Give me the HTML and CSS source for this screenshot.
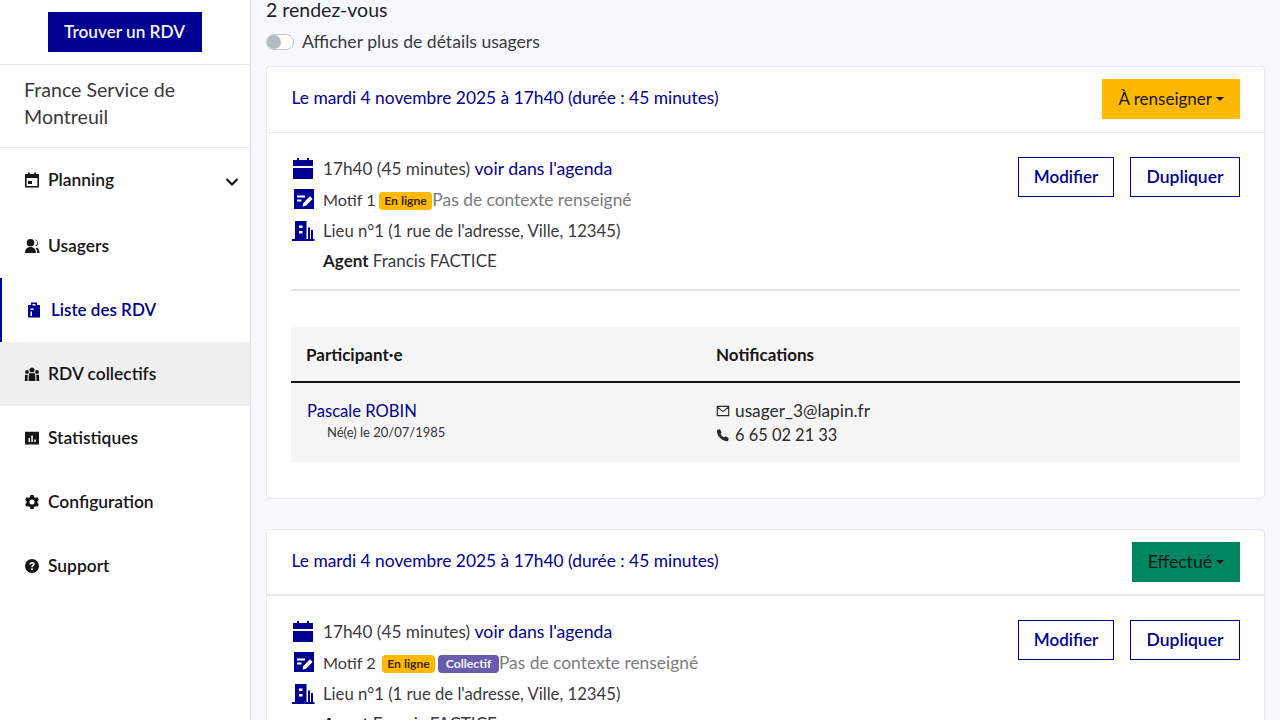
FILE: index.html
```html
<!DOCTYPE html>
<html lang="fr">
<head>
<meta charset="utf-8">
<title>Liste des RDV</title>
<link rel="stylesheet" href="styles.css">
</head>
<body>
<svg class="defs" width="0" height="0" aria-hidden="true">
  <symbol id="i-cal" viewBox="0 0 24 24"><path d="M6 1h2v2h8V1h2v2h4v6H2V3h4V1zM2 11h20v11H2V11z"/></symbol>
  <symbol id="i-note" viewBox="0 0 24 24"><rect x="3" y="2" width="20" height="20"/><path d="M6 9.500h8M6 13.500h4.500" fill="none" stroke="#fff" stroke-width="1.800"/><path d="M11.500 19.500l.8-3.500L19 9.300l2.600 2.600-6.600 6.800z" fill="#fff"/></symbol>
  <symbol id="i-build" viewBox="0 0 24 24"><path fill-rule="evenodd" d="M4 2h11.500v18h1.500V8.500h2V20h1V11h2v9h1.500v2H1v-2h3V2zm4 4.500v2.500h3.500V6.500H8zm0 5.500v2.500h3.500V12H8z"/></symbol>
</svg>
<div class="app">
  <aside class="sidebar">
    <div class="side-top"><a class="find-btn" href="#">Trouver un RDV</a></div>
    <div class="org">France Service de Montreuil</div>
    <nav class="nav">
      <a class="nav-item nav-first" href="#">
        <svg class="nav-icon" viewBox="0 0 16 16"><path fill-rule="evenodd" d="M4 .5h1.800V2h4.400V.5H12V2h3v13.500H1V2h3V.5zM2.600 6v8h10.800V6H2.600zM4 9h4v3H4V9z"/></svg>
        <span>Planning</span>
        <svg class="chev" viewBox="0 0 14 10"><path d="M1.500 2l5.500 5.500L12.500 2" fill="none" stroke="currentColor" stroke-width="2.200"/></svg>
      </a>
      <a class="nav-item" href="#">
        <svg class="nav-icon" viewBox="0 0 16 16"><path d="M6.500 1a3.800 3.800 0 110 7.600 3.800 3.800 0 010-7.600zM1 15c0-3.800 2-6 5.500-6s5.500 2.200 5.500 6H1zM10.800 1.300a3.800 3.800 0 011.500 6.900l-1-.8a2.800 2.800 0 000-5.300zM13 9.500c1.500.9 2.500 2.800 2.500 5.500h-2.200c0-2.200-.7-3.800-1.700-4.800z"/></svg>
        <span>Usagers</span>
      </a>
      <a class="nav-item nav-active" href="#">
        <svg class="nav-icon" viewBox="0 0 16 16"><path fill-rule="evenodd" d="M5 .5h6V3h3v12.500H2V3h3V.5zM6.500 2v1.500h3V2h-3zM4.500 6.500v1.500h3V6.500h-3zm0 3V14H6V9.500H4.500z"/></svg>
        <span>Liste des RDV</span>
      </a>
      <a class="nav-item nav-hover" href="#">
        <svg class="nav-icon" viewBox="0 0 16 16"><path d="M8 1.500a2.500 2.500 0 110 5 2.500 2.500 0 010-5zM3 4a1.900 1.900 0 110 3.800A1.900 1.900 0 013 4zm10 0a1.900 1.900 0 110 3.800A1.900 1.900 0 0113 4zM5 7.300h6l.5 7.700h-7zM1 8.800h2.800l-.4 6.200H.8zm11.200 0H15l.2 6.200h-2.600z"/></svg>
        <span>RDV collectifs</span>
      </a>
      <a class="nav-item" href="#">
        <svg class="nav-icon" viewBox="0 0 16 16"><path fill-rule="evenodd" d="M1 1.800h14v12.700H1V1.800zM4.500 8v4H6V8H4.500zm2.800-2.500V12h1.500V5.500H7.300zm2.900 4V12h1.500V9.500h-1.500z"/></svg>
        <span>Statistiques</span>
      </a>
      <a class="nav-item" href="#">
        <svg class="nav-icon" viewBox="0 0 16 16"><path fill-rule="evenodd" d="M6.500 1h3l.5 1.900 1.500.9 1.900-.6 1.500 2.600-1.400 1.400v1.600l1.400 1.400-1.500 2.600-1.900-.6-1.500.9-.5 1.900h-3L6 13.100l-1.500-.9-1.900.6-1.500-2.600L2.500 8.800V7.200L1.100 5.800l1.500-2.600 1.900.6L6 2.900 6.500 1zM8 5.500a2.500 2.500 0 100 5 2.500 2.500 0 000-5z"/></svg>
        <span>Configuration</span>
      </a>
      <a class="nav-item" href="#">
        <svg class="nav-icon" viewBox="0 0 16 16"><path fill-rule="evenodd" d="M8 1a7 7 0 110 14A7 7 0 018 1zM7.200 10.300v1.700h1.600v-1.700H7.200zM8 4C6.500 4 5.400 4.900 5.300 6.400H7c0-.6.400-1 1-1s1 .4 1 .9c0 1-1.800 1.100-1.800 3h1.600c0-1.400 1.900-1.500 1.900-3.200C10.700 4.800 9.600 4 8 4z"/></svg>
        <span>Support</span>
      </a>
    </nav>
  </aside>
  <main class="main">
    <div class="count">2 rendez-vous</div>
    <div class="toggle-row"><span class="switch"><span class="knob"></span></span><span class="toggle-label">Afficher plus de détails usagers</span></div>

    <section class="card">
      <header class="card-head">
        <a class="date" href="#">Le mardi 4 novembre 2025 à 17h40 (durée : 45 minutes)</a>
        <button class="status status-todo">À renseigner<span class="caret"></span></button>
      </header>
      <div class="card-body">
        <div class="summary">
          <ul class="facts">
            <li class="fact"><svg class="fact-icon"><use href="#i-cal"/></svg><span class="lift">17h40 (45 minutes) <a class="agenda" href="#">voir dans l'agenda</a></span></li>
            <li class="fact"><svg class="fact-icon"><use href="#i-note"/></svg><span class="motif"><span class="motif-name">Motif 1</span><span class="badge badge-online">En ligne</span><span class="muted">Pas de contexte renseigné</span></span></li>
            <li class="fact fact-place"><svg class="fact-icon"><use href="#i-build"/></svg><span>Lieu n°1 (1 rue de l'adresse, Ville, 12345)</span></li>
            <li class="fact fact-plain"><span class="lift"><b>Agent</b> Francis FACTICE</span></li>
          </ul>
          <div class="actions"><a class="btn btn-edit" href="#">Modifier</a><a class="btn btn-dup" href="#">Dupliquer</a></div>
        </div>
        <table class="table">
          <thead><tr><th class="col-a">Participant·e</th><th>Notifications</th></tr></thead>
          <tbody><tr>
            <td class="person-cell"><a class="person" href="#">Pascale ROBIN</a><div class="birth">Né(e) le 20/07/1985</div></td>
            <td>
              <div class="contact"><svg class="contact-icon" viewBox="0 0 16 16"><path fill="none" stroke="currentColor" stroke-width="1.300" d="M1.500 2.700h13v10.600h-13zM1.800 3.500L8 8.700l6.200-5.200"/></svg>usager_3@lapin.fr</div>
              <div class="contact contact-phone"><svg class="contact-icon" viewBox="0 0 16 16"><path d="M4.500 1.500l2 3.500-1.300 1.500c.8 1.800 2.400 3.400 4.200 4.200L11 9.500l3.500 2-.5 2.800c-.2.400-.7.700-1.300.7C7 15 1 9 1 3.300c0-.6.300-1.100.7-1.300z"/></svg>6 65 02 21 33</div>
            </td>
          </tr></tbody>
        </table>
      </div>
    </section>

    <section class="card">
      <header class="card-head card-head-strong">
        <a class="date" href="#">Le mardi 4 novembre 2025 à 17h40 (durée : 45 minutes)</a>
        <button class="status status-done">Effectué<span class="caret"></span></button>
      </header>
      <div class="card-body">
        <div class="summary">
          <ul class="facts">
            <li class="fact"><svg class="fact-icon"><use href="#i-cal"/></svg><span class="lift">17h40 (45 minutes) <a class="agenda" href="#">voir dans l'agenda</a></span></li>
            <li class="fact"><svg class="fact-icon"><use href="#i-note"/></svg><span class="motif"><span class="motif-name">Motif 2</span><span class="badge badge-online badge-spaced">En ligne</span><span class="badge badge-coll">Collectif</span><span class="muted">Pas de contexte renseigné</span></span></li>
            <li class="fact fact-place"><svg class="fact-icon"><use href="#i-build"/></svg><span>Lieu n°1 (1 rue de l'adresse, Ville, 12345)</span></li>
            <li class="fact fact-plain"><span class="lift"><b>Agent</b> Francis FACTICE</span></li>
          </ul>
          <div class="actions"><a class="btn btn-edit" href="#">Modifier</a><a class="btn btn-dup" href="#">Dupliquer</a></div>
        </div>
      </div>
    </section>
  </main>
</div>
</body>
</html>
```
FILE: styles.css
```css
* { box-sizing: border-box; }
html, body { margin: 0; height: 720px; overflow: hidden; }
body { font-family: "Lato", "Liberation Sans", sans-serif; font-size: 17.3px; color: #1e1e1e; background: #f8f9fe; }
a { color: #000091; text-decoration: none; }
.defs { position: absolute; }
.app { display: flex; height: 720px; }

.sidebar { width: 251px; flex: none; background: #fff; border-right: 1px solid #dfe5ee; }
.side-top { height: 65px; padding-top: 12px; display: flex; justify-content: center; border-bottom: 1px solid #e5e9f0; padding-right: 1px; }
.find-btn { width: 154px; height: 40px; padding-bottom: 1px; background: #000091; color: #f5f5fe; font-weight: 600; font-size: 17.2px; display: flex; align-items: center; justify-content: center; }
.org { height: 83px; padding: 11px 40px 0 24px; font-size: 19.6px; line-height: 27px; color: #3a3a3a; border-bottom: 1px solid #e5e9f0; }

.nav { display: flex; flex-direction: column; }
.nav-item { height: 64px; padding-left: 24px; padding-bottom: 1px; display: flex; align-items: center; gap: 8px; color: #161616; font-weight: 600; font-size: 17.4px; }
.nav-first { height: 66px; padding-bottom: 3px; }
.nav-icon { width: 16px; height: 16px; fill: currentColor; flex: none; }
.chev { width: 14px; height: 10px; margin-left: auto; margin-right: 11px; margin-top: 4px; }
.nav-active { color: #000091; border-left: 2px solid #000091; gap: 9px; font-size: 17px; }
.nav-hover { background: #f0f0f0; }

.main { flex: 1; min-width: 0; padding: 0 15px 0 15px; }
.count { height: 18px; font-size: 19.5px; line-height: 20px; }
.toggle-row { height: 48px; display: flex; align-items: center; gap: 8px; color: #3a3a3a; font-size: 17.6px; }
.toggle-label { padding-bottom: 2px; }
.switch { width: 28px; height: 16px; border-radius: 8px; border: 1px solid #c5c5c5; background: #fff; display: block; }
.knob { width: 14px; height: 14px; border-radius: 50%; background: #b4bac2; display: block; }

.card { background: #fff; border: 1px solid #e5e9f0; border-radius: 4px; margin-bottom: 30px; }
.card-head { height: 66px; padding: 12px 24px 0; display: flex; justify-content: space-between; border-bottom: 1px solid #e5e9f0; }
.card-head-strong { border-bottom-width: 2px; }
.date { line-height: 38px; font-size: 17.38px; padding-left: 0.5px; }
.status { height: 40px; border: 0; padding: 0 16px 2px; color: #161616; font: inherit; font-size: 17px; display: flex; align-items: center; gap: 4px; }
.status-todo { background: #ffb900; }
.status-done { background: #008561; font-size: 17.6px; }
.caret { width: 0; height: 0; margin-top: 2px; border: 4px solid transparent; border-top-color: currentColor; border-bottom: 0; }

.card-body { padding: 24px 24px 36px; }
.summary { display: flex; justify-content: space-between; height: 134px; border-bottom: 2px solid #e2e2e2; }
.facts { list-style: none; margin: 0; padding: 0; }
.fact { height: 24px; margin-bottom: 6px; display: flex; align-items: center; gap: 8px; color: #3a3a3a; font-size: 17.2px; }
.fact b { color: #1e1e1e; }
.lift { padding-bottom: 2px; }
.agenda { font-size: 17.7px; }
.fact-place { font-size: 16.7px; margin-top: 8px; }
.fact-plain { padding-left: 32px; font-size: 17px; }
.fact-icon { width: 24px; height: 24px; fill: #000091; flex: none; }
.motif { display: flex; align-items: center; }
.motif-name { font-size: 16.2px; }
.badge { font-size: 12.2px; font-weight: 700; height: 18px; line-height: 18px; border-radius: 4px; padding: 0 5.5px; margin-top: 3px; }
.badge-online { background: #ffb900; color: #3a2a00; margin-left: 3px; }
.badge-spaced { margin-left: 6px; }
.badge-coll { background: #6a5cad; color: #f5f5fe; margin-left: 3px; padding: 0 7.5px; }
.muted { color: #7b7b7b; font-size: 17.4px; }
.actions { display: flex; gap: 16px; align-items: flex-start; }
.btn { height: 40px; padding: 0 0 1px; border: 1px solid #000091; font-weight: 600; display: flex; align-items: center; justify-content: center; }
.btn-edit { width: 96px; font-size: 17px; }
.btn-dup { width: 110px; font-size: 17.5px; }

.table { width: 100%; margin-top: 36px; border-collapse: collapse; background: #f6f6f6; }
.table th { height: 55px; text-align: left; padding: 0 16px 0 15px; font-size: 17px; font-weight: 700; border-bottom: 2px solid #161616; color: #161616; }
.col-a { width: 410px; }
.table td { height: 80px; padding: 0 15px; vertical-align: middle; font-size: 17.3px; color: #2a2a2a; }
.table .person-cell { padding: 0 16px 4px; }
.person { font-size: 16.6px; display: block; line-height: 22px; }
.birth { font-size: 13px; padding-left: 20px; line-height: 20px; color: #333; }
.contact { display: flex; align-items: center; gap: 5px; line-height: 24px; }
.contact-phone { font-size: 16.4px; }
.contact-icon { width: 14px; height: 14px; fill: currentColor; flex: none; }
```
